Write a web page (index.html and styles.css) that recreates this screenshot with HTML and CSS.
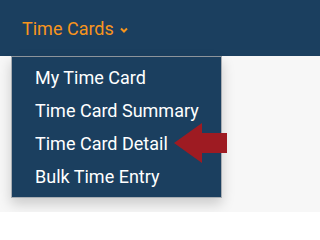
FILE: index.html
```html
<!DOCTYPE html>
<html>
<head>
<meta charset="utf-8">
<link rel="stylesheet" href="styles.css">
</head>
<body>
<nav class="navbar">
  <span class="nav-title">Time Cards</span>
  <svg class="caret" width="8" height="6" viewBox="0 0 8 6"><path d="M1 1.5 L4 4.5 L7 1.5" fill="none" stroke="#f7941d" stroke-width="2"/></svg>
</nav>
<div class="stage">
  <ul class="dropdown">
    <li>My Time Card</li>
    <li>Time Card Summary</li>
    <li>Time Card Detail</li>
    <li>Bulk Time Entry</li>
  </ul>
  <svg class="pointer" width="60" height="44" viewBox="0 0 60 44"><polygon points="0,20 28,0 28,10 53,10 53,30 28,30 28,40" fill="#9e1b22"/></svg>
</div>
</body>
</html>
```
FILE: styles.css
```css
html, body {
  margin: 0;
  padding: 0;
  background: #ffffff;
  font-family: Roboto, "Liberation Sans", sans-serif;
}
.navbar {
  height: 56px;
  background: #1b3f5f;
  display: flex;
  align-items: center;
  padding-left: 22px;
  box-sizing: border-box;
  gap: 6px;
}
.nav-title {
  color: #f7941d;
  font-size: 18px;
  margin-top: 1px;
}
.caret {
  margin-top: 4px;
}
.stage {
  position: relative;
  height: 156px;
  background: #f7f7f7;
}
.dropdown {
  list-style: none;
  margin: 0 0 0 11px;
  padding: 4px 0 4px;
  width: 209px;
  background: #1b3f5f;
  border: 1px solid #a8adb3;
  border-top-color: #8d949b;
  box-shadow: 0 6px 12px rgba(0, 0, 0, 0.18);
}
.dropdown li {
  color: #ffffff;
  font-size: 18px;
  line-height: 33px;
  padding-left: 23px;
}
.pointer {
  position: absolute;
  left: 174px;
  top: 67px;
}
```
